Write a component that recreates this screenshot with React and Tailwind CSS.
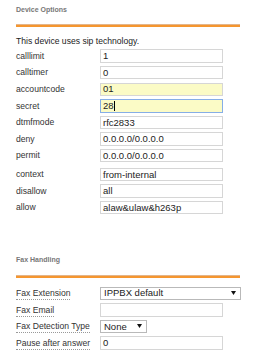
import React from 'react';

const deviceRows = [
  { label: 'calllimit', value: '1' },
  { label: 'calltimer', value: '0' },
  { label: 'accountcode', value: '01', highlight: true },
  { label: 'secret', value: '28', highlight: true, focused: true },
  { label: 'dtmfmode', value: 'rfc2833' },
  { label: 'deny', value: '0.0.0.0/0.0.0.0' },
  { label: 'permit', value: '0.0.0.0/0.0.0.0' },
];

const extraRows = [
  { label: 'context', value: 'from-internal' },
  { label: 'disallow', value: 'all' },
  { label: 'allow', value: 'alaw&ulaw&h263p' },
];

const SectionTitle = ({ children }) => (
  <div className="h-[20px] leading-[20px] text-[7px] font-bold text-[#777]">{children}</div>
);

const OrangeRule = () => (
  <div className="w-[224px] h-[3px] bg-[#f5962f] border-t border-[#e3b58a]" />
);

const TextBox = ({ value, highlight, focused, width = 'w-[123px]' }) => (
  <div
    className={`${width} h-[13.4px] flex items-center pl-[2px] text-[9.5px] leading-none text-[#222] border ${
      focused ? 'border-[#86aee6]' : 'border-[#d6d6d6]'
    } ${highlight ? 'bg-[#fbfbc6]' : 'bg-white'}`}
  >
    <span>{value}</span>
    {focused && <span className="w-px h-[10px] bg-black ml-[0.5px]" />}
  </div>
);

const SelectBox = ({ value, width }) => (
  <div
    className={`${width} h-[13.4px] flex items-center justify-between pl-[3px] pr-[4px] text-[9.5px] leading-none text-[#222] border border-[#b9b9b9] bg-white`}
  >
    <span>{value}</span>
    <svg width="5" height="4" viewBox="0 0 5 4">
      <path d="M0 0 L5 0 L2.5 4 Z" fill="#111" />
    </svg>
  </div>
);

const Row = ({ label, children, dotted }) => (
  <div className="h-[16.65px] flex items-center">
    <div className="w-[84px] text-[8.6px] leading-none text-[#333]">
      {dotted ? (
        <span className="border-b border-dotted border-[#999] pb-[1px]">{label}</span>
      ) : (
        label
      )}
    </div>
    {children}
  </div>
);

export default function App() {
  return (
    <div
      className="w-[261px] h-[363px] bg-white overflow-hidden pl-[16px]"
      style={{ fontFamily: '"Liberation Sans", Arial, sans-serif' }}
    >
      {/* Device Options */}
      <SectionTitle>Device Options</SectionTitle>
      <div className="mt-[4px]">
        <OrangeRule />
      </div>
      <div className="mt-[8px] h-[12px] leading-[12px] text-[8.6px] text-[#222]">
        This device uses sip technology.
      </div>
      <div className="mt-[0.6px]">
        {deviceRows.map((r) => (
          <Row key={r.label} label={r.label}>
            <TextBox value={r.value} highlight={r.highlight} focused={r.focused} />
          </Row>
        ))}
      </div>
      <div className="mt-[1.9px]">
        {extraRows.map((r) => (
          <Row key={r.label} label={r.label}>
            <TextBox value={r.value} />
          </Row>
        ))}
      </div>

      {/* Fax Handling */}
      <div className="mt-[34px]">
        <SectionTitle>Fax Handling</SectionTitle>
      </div>
      <div className="mt-[5px]">
        <OrangeRule />
      </div>
      <div className="mt-[7px]">
        <Row label="Fax Extension" dotted>
          <SelectBox value="IPPBX default" width="w-[141px]" />
        </Row>
        <Row label="Fax Email" dotted>
          <TextBox value="" />
        </Row>
        <Row label="Fax Detection Type" dotted>
          <SelectBox value="None" width="w-[47px]" />
        </Row>
        <Row label="Pause after answer" dotted>
          <TextBox value="0" />
        </Row>
      </div>
    </div>
  );
}
